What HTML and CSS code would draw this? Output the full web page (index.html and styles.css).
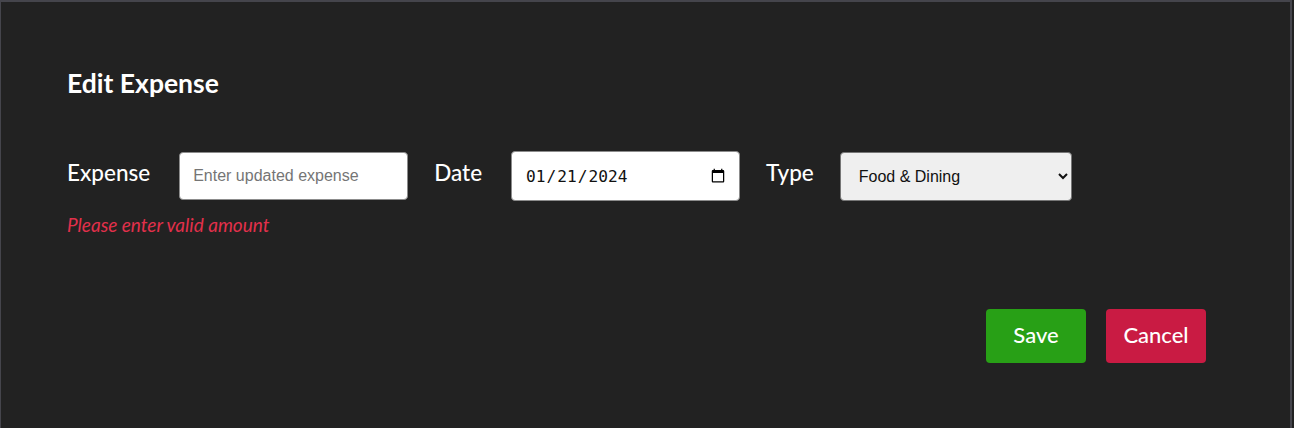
FILE: index.html
```html
<!DOCTYPE html>
<html lang="en">
<head>
<meta charset="utf-8">
<title>Edit Expense</title>
<link rel="stylesheet" href="styles.css">
</head>
<body>
<div class="dialog">
  <h2 class="title">Edit Expense</h2>
  <form class="form">
    <div class="row">
      <label class="label label-expense" for="expense">Expense</label>
      <input class="field field-text" id="expense" type="text" placeholder="Enter updated expense">
      <label class="label label-date" for="date">Date</label>
      <input class="field field-date" id="date" type="date" value="2024-01-21">
      <label class="label label-type" for="type">Type</label>
      <select class="field field-select" id="type">
        <option>Food &amp; Dining</option>
        <option>Transport</option>
        <option>Shopping</option>
      </select>
    </div>
    <p class="error">Please enter valid amount</p>
    <div class="actions">
      <button type="button" class="btn btn-save">Save</button>
      <button type="button" class="btn btn-cancel">Cancel</button>
    </div>
  </form>
</div>
</body>
</html>
```
FILE: styles.css
```css
html, body {
  margin: 0;
  padding: 0;
  background: #222222;
  height: 100%;
}

body {
  font-family: "Lato", "Open Sans", sans-serif;
  color: #ffffff;
  overflow: hidden;
}

.dialog {
  box-sizing: border-box;
  height: 428px;
  margin-right: 2px;
  border-top: 2px solid #45454c;
  border-left: 1px solid #45454c;
  border-right: 2px solid #45454c;
  background: #222222;
  padding: 65px 84px 0 66px;
}

.title {
  margin: 0;
  font-size: 26.5px;
  font-weight: 700;
  line-height: 32px;
}

.form {
  margin-top: 52px;
}

.row {
  display: flex;
  align-items: center;
  height: 50px;
}

.label {
  font-size: 22.5px;
  font-weight: 500;
  line-height: 26px;
  margin-top: -6px;
}

.label-expense { margin-right: 29px; }
.label-date { margin-left: 26px; margin-right: 29px; }
.label-type { margin-left: 26px; margin-right: 26px; }

.field {
  box-sizing: border-box;
  width: 229px;
  border: 1px solid #8c8c8c;
  border-radius: 4px;
  font-family: "Liberation Sans", Arial, sans-serif;
  font-size: 16px;
  color: #111111;
  background: #ffffff;
  outline: none;
}

.field-text {
  height: 48px;
  padding: 0 13px;
}

.field-text::placeholder {
  color: #757575;
}

.field-date {
  height: 50px;
  padding: 0 11px 0 13px;
  font-family: "DejaVu Sans Mono", monospace;
  font-size: 16.2px;
}

.field-select {
  width: 232px;
  height: 49px;
  padding: 0 4px 0 14px;
  background: #efefef;
  border-color: #767676;
}

.error {
  margin: 12px 0 0;
  font-style: italic;
  font-size: 19px;
  line-height: 24px;
  color: #e2304b;
}

.actions {
  display: flex;
  justify-content: flex-end;
  gap: 20px;
  margin-top: 72px;
}

.btn {
  width: 100px;
  height: 54px;
  padding: 0 0 3px;
  border: none;
  border-radius: 4px;
  font-family: "Lato", "Open Sans", sans-serif;
  font-size: 22px;
  font-weight: 500;
  color: #ffffff;
  cursor: pointer;
}

.btn-save { background: #28a016; }
.btn-cancel { background: #c91b43; }
```
